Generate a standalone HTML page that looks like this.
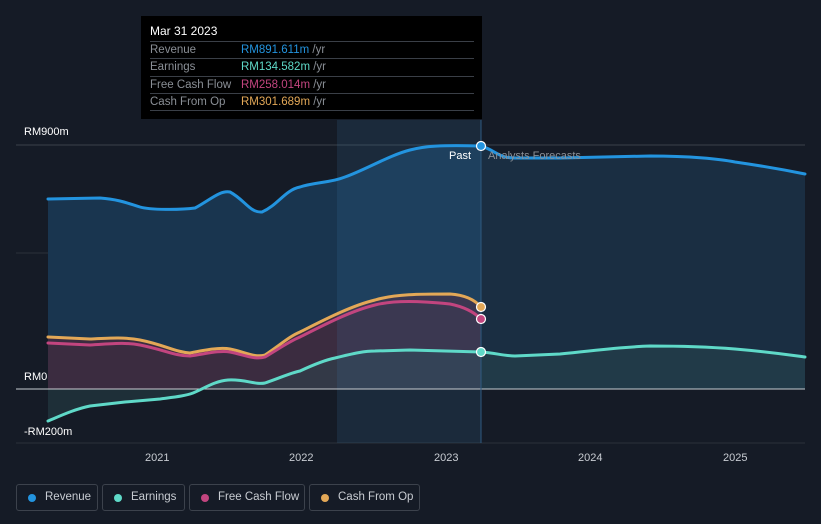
<!DOCTYPE html>
<html><head><style>
body{margin:0;background:#151b26;font-family:"Liberation Sans",sans-serif;}
.wrap{position:relative;width:821px;height:524px;overflow:hidden;background:#151b26}
.tt{position:absolute;left:141px;top:16px;width:341px;height:103px;background:#000;color:#fff;font-size:11.5px}
.tt .h{position:absolute;left:9px;top:8px;font-size:12px}
.tt .r{position:absolute;left:9px;width:324px;border-top:1px solid #3a3f47;height:17px;line-height:17px;color:#8a8f96}
.tt .r b{font-weight:normal;position:absolute;left:91px}
.tt .r i{font-style:normal;color:#8a8f96}
.leg{position:absolute;top:484px;height:27px;border:1px solid #3c424c;border-radius:3px;color:#c8ccd2;font-size:11.5px;line-height:25px;box-sizing:border-box}
.leg span{position:absolute;left:11px;top:9px;width:8px;height:8px;border-radius:50%}
.leg em{font-style:normal;position:absolute;left:28px}
.ax{position:absolute;color:#fff;font-size:11px}
</style></head><body><div class="wrap">
<svg width="821" height="524" style="position:absolute;left:0;top:0">
<line x1="16" y1="145" x2="805" y2="145" stroke="#3a404a"/>
<line x1="16" y1="253" x2="805" y2="253" stroke="#2b313b"/>
<line x1="16" y1="443" x2="805" y2="443" stroke="#2b313b"/>
<path d="M48,199 L100,198 C115,199 125,202 140,207 C150,210 180,210 195,208 C210,200 220,190 230,192 C245,200 250,213 262,212 C278,205 285,190 300,187 C315,182 330,183 345,177 C365,170 390,155 410,150 C425,146 440,145 481,146 L481,389 L48,389Z" fill="#19354f"/>
<path d="M481,146 C495,150 498,158 515,158 L560,158 L650,156 C690,156 720,159 735,162 C770,167 790,171 805,174 L805,389 L481,389Z" fill="#1a2e42"/>
<path d="M48,337 L90,339 C110,338 125,337 140,340 C165,345 175,352 190,353 C205,350 220,347 230,349 C245,352 255,358 265,355 C280,345 290,336 300,332 C320,322 350,306 375,300 C395,294 420,294 450,294 C465,295 475,300 481,307 L481,389 L48,389Z" fill="#4a2a3a" opacity=".7"/>
<path d="M48,421 C60,416 75,409 90,406 L125,402 L160,399 C175,397 185,396 193,393 C205,388 215,381 228,380 C245,379 255,385 265,383 C280,378 290,373 300,371 C315,364 325,360 335,358 C355,353 365,351 375,351 L410,350 L481,352 C495,353 505,356 515,356 L560,354 C600,350 620,347 650,346 C690,346 710,347 735,349 C770,352 790,355 805,357 L805,389 L48,389Z" fill="#2a4a4f" opacity=".45"/>
<rect x="337" y="120" width="144" height="323" fill="#3f7bb0" opacity=".16"/>
<line x1="16" y1="389" x2="805" y2="389" stroke="#c8ccd2"/>
<g fill="none" stroke-width="3" stroke-linecap="round" stroke-linejoin="round">
<path d="M48,199 L100,198 C115,199 125,202 140,207 C150,210 180,210 195,208 C210,200 220,190 230,192 C245,200 250,213 262,212 C278,205 285,190 300,187 C315,182 330,183 345,177 C365,170 390,155 410,150 C425,146 440,145 481,146 C495,150 498,158 515,158 L560,158 L650,156 C690,156 720,159 735,162 C770,167 790,171 805,174" stroke="#2394df"/>
<path d="M48,337 L90,339 C110,338 125,337 140,340 C165,345 175,352 190,353 C205,350 220,347 230,349 C245,352 255,358 265,355 C280,345 290,336 300,332 C320,322 350,306 375,300 C395,294 420,294 450,294 C465,295 475,300 481,307" stroke="#e3a857"/>
<path d="M48,343 L90,345 C110,344 125,342 140,345 C165,350 175,356 190,356 C205,354 220,350 230,352 C245,355 255,360 265,357 C280,348 290,341 300,337 C320,327 350,311 375,305 C395,300 420,301 450,304 C465,307 475,313 481,319" stroke="#c2457f"/>
<path d="M48,421 C60,416 75,409 90,406 L125,402 L160,399 C175,397 185,396 193,393 C205,388 215,381 228,380 C245,379 255,385 265,383 C280,378 290,373 300,371 C315,364 325,360 335,358 C355,353 365,351 375,351 L410,350 L481,352 C495,353 505,356 515,356 L560,354 C600,350 620,347 650,346 C690,346 710,347 735,349 C770,352 790,355 805,357" stroke="#5fd9c8"/>
</g>
<line x1="481" y1="120" x2="481" y2="443" stroke="#2e5a80"/>
<circle cx="481" cy="146" r="4.5" fill="#2394df" stroke="#fff" stroke-width="1.2"/>
<circle cx="481" cy="307" r="4.5" fill="#e3a857" stroke="#fff" stroke-width="1.2"/>
<circle cx="481" cy="319" r="4.5" fill="#c2457f" stroke="#fff" stroke-width="1.2"/>
<circle cx="481" cy="352" r="4.5" fill="#5fd9c8" stroke="#fff" stroke-width="1.2"/>
</svg>
<div class="ax" style="left:24px;top:126px">RM900m</div>
<div class="ax" style="left:24px;top:371px">RM0</div>
<div class="ax" style="left:24px;top:426px">-RM200m</div>
<div class="ax" style="left:449px;top:150px">Past</div>
<div class="ax" style="left:488px;top:150px;color:#8a8f96">Analysts Forecasts</div>
<div class="ax" style="left:145px;top:452px;color:#c8ccd2">2021</div>
<div class="ax" style="left:289px;top:452px;color:#c8ccd2">2022</div>
<div class="ax" style="left:434px;top:452px;color:#c8ccd2">2023</div>
<div class="ax" style="left:578px;top:452px;color:#c8ccd2">2024</div>
<div class="ax" style="left:723px;top:452px;color:#c8ccd2">2025</div>
<div class="tt"><div class="h">Mar 31 2023</div>
<div class="r" style="top:25px">Revenue<b style="color:#2394df">RM891.611m <i>/yr</i></b></div>
<div class="r" style="top:42px">Earnings<b style="color:#5fd9c8">RM134.582m <i>/yr</i></b></div>
<div class="r" style="top:60px">Free Cash Flow<b style="color:#c2457f">RM258.014m <i>/yr</i></b></div>
<div class="r" style="top:77px">Cash From Op<b style="color:#e3a857">RM301.689m <i>/yr</i></b></div>
<div class="r" style="top:94px;height:0"></div>
</div>
<div class="leg" style="left:16px;width:82px"><span style="background:#2394df"></span><em>Revenue</em></div>
<div class="leg" style="left:102px;width:83px"><span style="background:#5fd9c8"></span><em>Earnings</em></div>
<div class="leg" style="left:189px;width:116px"><span style="background:#c2457f"></span><em>Free Cash Flow</em></div>
<div class="leg" style="left:309px;width:111px"><span style="background:#e3a857"></span><em>Cash From Op</em></div>
</div></body></html>
